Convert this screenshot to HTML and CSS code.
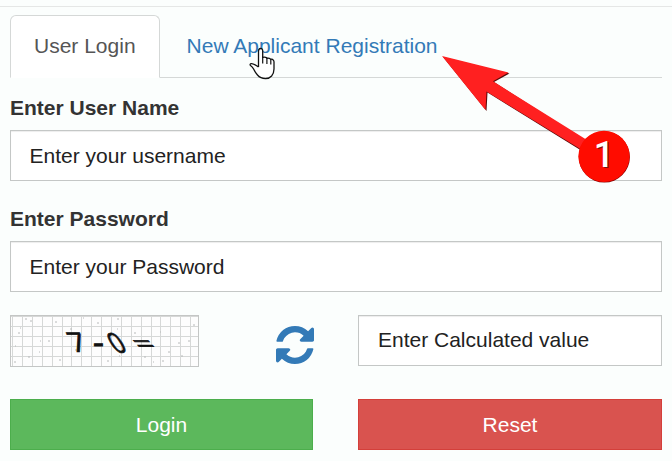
FILE: index.html
```
<!DOCTYPE html>
<html lang="en">

<head>
  <meta charset="UTF-8">
  <meta name="viewport" content="width=device-width, initial-scale=1.0">
  <title>User Login</title>
  <link rel="stylesheet" href="styles.css">
</head>

<body>
  <div class="login-panel">
    <ul class="nav-tabs">
      <li class="active"><a href="#">User Login</a></li>
      <li><a href="#">New Applicant Registration</a></li>
    </ul>

    <form class="login-form">
      <label for="username">Enter User Name</label>
      <input type="text" class="form-control" id="username" placeholder="Enter your username">

      <label for="password">Enter Password</label>
      <input type="password" class="form-control" id="password" placeholder="Enter your Password">

      <div class="row captcha-row">
        <div class="captcha">
          <svg class="captcha-img" viewBox="0 0 189 52" width="189" height="52">
            <rect x="0.5" y="0.5" width="188" height="51" fill="#fdfdfd" stroke="#c4c6c5" />
            <path class="grid" d="M2.5 1v50M12.5 1v50M22.5 1v50M32.5 1v50M42.5 1v50M52.5 1v50M61.5 1v50M71.5 1v50M81.5 1v50M91.5 1v50M101.5 1v50M111.5 1v50M121.5 1v50M131.5 1v50M141.5 1v50M150.5 1v50M160.5 1v50M170.5 1v50M180.5 1v50M1 1.5h187M1 11.5h187M1 21.5h187M1 31.5h187M1 41.5h187" />
            <path class="noise" d="M15 4h2M20 6h2M10 13h1M8 18h2M30 26h1M38 26h2M5 31h1M29 37h1M18 42h2M4 47h2M45 7h2M60 14h2M49 45h2M73 3h1M87 8h2M107 4h2M107 14h1M124 18h2M150 17h1M183 10h2M178 26h2M168 28h2M158 37h2M171 41h2M134 42h2M143 47h1M152 46h2M97 46h2M65 35h2M109 41h1" />
            <text x="0" y="0" transform="translate(63 37) skewX(23) scale(1.05 1)" font-size="27">7</text>
            <text x="0" y="0" transform="translate(83 38) scale(1.300 1.200)" font-size="26">-</text>
            <text x="0" y="0" transform="translate(106 38.500) rotate(-8) skewX(24) scale(.85 1.080)" font-size="27">0</text>
            <text x="0" y="0" transform="translate(132 37) skewX(42) scale(1.200 .9)" font-size="27">=</text>
          </svg>
          <a href="#" class="refresh">
            <svg viewBox="0 128 1536 1536" width="38" height="38">
              <path fill="#337ab7" d="M1511 1056q0 5-1 7-64 268-268 434.500t-478 166.500q-146 0-282.500-55t-243.500-157l-129 129q-19 19-45 19t-45-19-19-45v-448q0-26 19-45t45-19h448q26 0 45 19t19 45-19 45l-137 137q71 66 161 102t187 36q134 0 250-65t186-179q11-17 53-117 8-23 30-23h192q13 0 22.500 9.500t9.500 22.500zm25-800v448q0 26-19 45t-45 19h-448q-26 0-45-19t-19-45 19-45l138-138q-148-137-349-137-134 0-250 65t-186 179q-11 17-53 117-8 23-30 23h-199q-13 0-22.500-9.500t-9.500-22.500v-7q65-268 270-434.500t480-166.500q146 0 284 55.500t245 156.500l130-129q19-19 45-19t45 19 19 45z" />
            </svg>
          </a>
        </div>
        <input type="text" class="form-control" id="captcha" placeholder="Enter Calculated value">
      </div>

      <div class="row">
        <button type="button" class="btn btn-success">Login</button>
        <button type="button" class="btn btn-danger">Reset</button>
      </div>
    </form>
  </div>

  <!-- hand pointer over the registration tab -->
  <svg class="pointer" viewBox="0 0 26 33" width="26" height="33">
    <path d="M9.500 20V4.200Q9.500 1.500 11.600 1.500T13.700 4.200V10.500Q15 9.900 16.600 10.300T18 11.300Q20 10.900 21.800 12.200Q23.500 12 24.500 13.300Q25 14 25 15V22Q25 26 22.600 29Q20.500 31.500 16.500 31.500Q11.500 31.500 8.500 28Q6 25 4.600 22Q3.500 19.800 1.500 18.500Q.5 17.400 1.800 16.700Q3.800 15.900 9.500 20" fill="#fff" stroke="#111" stroke-width="1.300" stroke-linejoin="round" />
    <path d="M13.700 10V16.500M17.900 11V17M21.800 12V17.500" fill="none" stroke="#111" stroke-width="1.200" />
  </svg>

  <!-- arrow from step 1 to the registration tab -->
  <svg class="step-arrow" viewBox="0 0 192 136" width="192" height="136">
    <path d="M3 7 69.500 23.500 54 32 146 91 142 101 47.500 42.500 46.500 61Z" fill="#5a0a0a" />
    <path d="M2 6 68.500 22.500 53 31.300 147 90 142 100 46.500 41.500 45.500 60Z" fill="#ff2020" />
    <circle cx="164.300" cy="107" r="25.600" fill="#8a0000" />
    <circle cx="164" cy="106.300" r="25.600" fill="#ff0c00" />
    <text class="step-shadow" x="165" y="118">1</text>
    <text class="step-number" x="164" y="117">1</text>
  </svg>
</body>

</html>
```

FILE: styles.css
```
* {
  box-sizing: border-box;
}

body {
  margin: 0;
  font-family: "Liberation Sans", Arial, sans-serif;
  font-size: 21px;
  line-height: 30px;
  color: #333;
  background-color: #fbfefd;
  overflow: hidden;
}

a {
  color: #337ab7;
  text-decoration: none;
}

.login-panel {
  margin-top: 6px;
  padding: 8px 10px 0;
  border-top: 1px solid #e5e7e6;
}

.nav-tabs {
  display: flex;
  margin: 0;
  padding: 0;
  list-style: none;
  border-bottom: 1px solid #d5d8d7;
}

.nav-tabs li {
  margin-right: 3px;
  margin-bottom: -1px;
}

.nav-tabs a {
  display: block;
  height: 63px;
  padding: 15px 23px;
  border: 1px solid transparent;
  border-radius: 6px 6px 0 0;
}

.nav-tabs .active a {
  color: #555;
  background-color: #fff;
  border-color: #d5d8d7;
  border-bottom-color: #fff;
}

.login-form {
  padding-top: 15px;
}

label {
  display: block;
  margin-bottom: 7px;
  font-weight: bold;
}

.form-control {
  display: block;
  width: 100%;
  height: 51px;
  margin-bottom: 23px;
  padding: 9px 18.5px;
  font-family: inherit;
  font-size: 21px;
  color: #222;
  background-color: #fff;
  border: 1px solid #c4c7c6;
  border-radius: 0;
  box-shadow: inset 0 1px 1px rgba(0, 0, 0, 0.075);
}

.form-control::placeholder {
  color: #222;
  opacity: 1;
}

.row {
  display: grid;
  grid-template-columns: 303px 304px;
  column-gap: 45px;
}

.captcha-row {
  margin-bottom: 33px;
}

.captcha-row .form-control {
  margin-bottom: 0;
  padding: 8px 19px 10px;
}

.captcha {
  display: flex;
  height: 51px;
}

.captcha-img {
  flex: none;
}

.captcha-img .grid {
  stroke: #d6d8d7;
}

.captcha-img .noise {
  stroke: #b8baba;
}

.captcha-img text {
  font-family: "Open Sans", sans-serif;
  fill: #111;
  stroke: #111;
  stroke-width: 0.7;
}

.refresh {
  margin: 11px 0 0 77px;
}

.refresh svg {
  display: block;
}

.btn {
  height: 51px;
  padding: 0;
  font-family: inherit;
  font-size: 21px;
  color: #fff;
  border: 1px solid;
}

.btn-success {
  background-color: #5cb85c;
  border-color: #4cae4c;
}

.btn-danger {
  background-color: #d9534f;
  border-color: #d43f3a;
}

.pointer {
  position: absolute;
  left: 249px;
  top: 47px;
}

.step-arrow {
  position: absolute;
  left: 440px;
  top: 50px;
}

.step-arrow text {
  font-family: Roboto, sans-serif;
  font-size: 36px;
  font-weight: 500;
  text-anchor: middle;
}

.step-shadow {
  fill: #7a1010;
}

.step-number {
  fill: #fff;
}
```
